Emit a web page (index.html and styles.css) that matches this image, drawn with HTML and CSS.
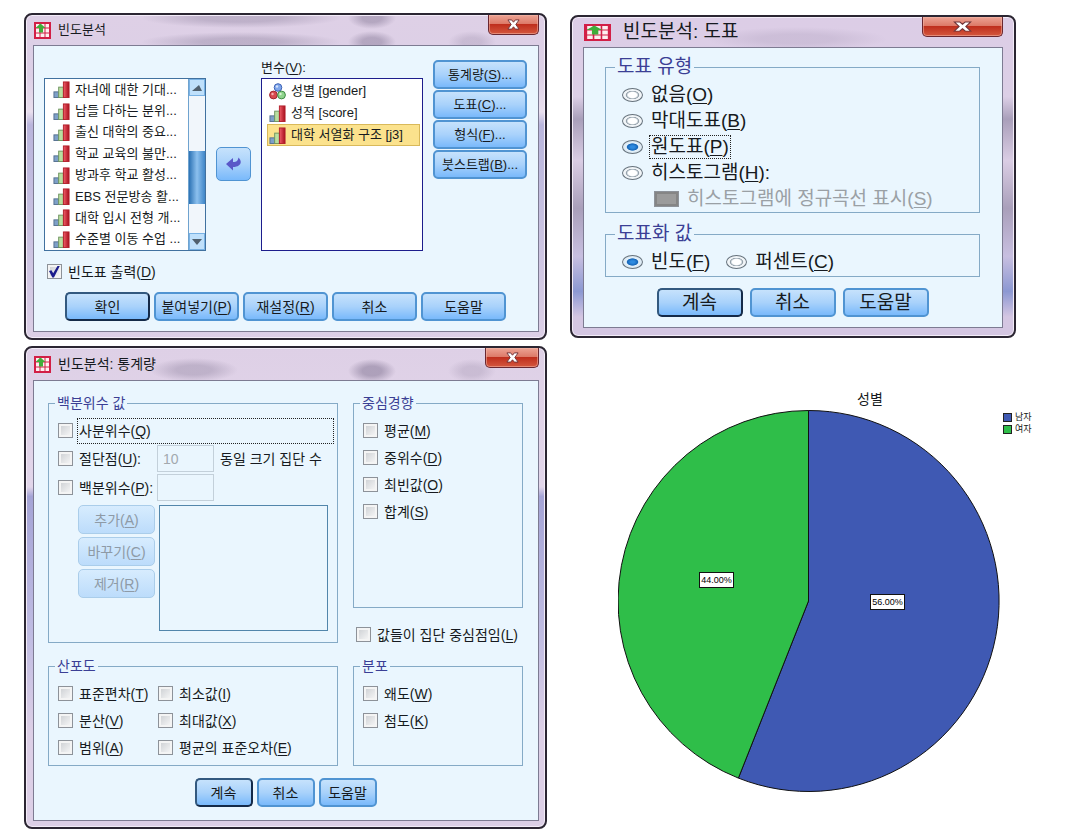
FILE: index.html
```html
<!DOCTYPE html>
<html lang="ko">
<head>
<meta charset="utf-8">
<title>빈도분석</title>
<link rel="stylesheet" href="styles.css">
</head>
<body>
<svg class="defs" aria-hidden="true">
  <defs>
    <linearGradient id="red" x1="0" x2="1"><stop offset="0" stop-color="#f0606a"/><stop offset="1" stop-color="#a80d1c"/></linearGradient>
    <symbol id="app" viewBox="0 0 17 17" preserveAspectRatio="none">
      <rect width="17" height="17" fill="#d21f46"/>
      <path d="M2 2h3.500v3.500H2zM6.500 2h4v3.500h-4zM11.500 2H15v3.500h-3.500zM2 6.500h3.500v4H2zM6.500 6.500h4v4h-4zM11.500 6.500H15v4h-3.500zM2 11.500h3.500V15H2zM6.500 11.500h4V15h-4zM11.500 11.500H15V15h-3.500z" fill="#fdeff0"/>
      <path d="M6.500 1.500L11.500 6H9v4.500H5V6H1.500z" fill="#3fae3a"/>
    </symbol>
    <symbol id="bars" viewBox="0 0 17 18">
      <rect x=".5" y="11.500" width="5" height="6" fill="#7ea0c8" stroke="#55708f"/>
      <rect x="5.500" y="6.500" width="5" height="11" fill="#b9dfa0" stroke="#6f9460"/>
      <rect x="10.500" y="1" width="6" height="16.500" fill="url(#red)" stroke="#b3202c"/>
    </symbol>
    <symbol id="balls" viewBox="0 0 17 17">
      <circle cx="9" cy="4.500" r="3.800" fill="#7fa6ea" stroke="#3d62b4"/>
      <circle cx="4.500" cy="12" r="3.900" fill="#d84a4e" stroke="#9d2630"/>
      <circle cx="12.500" cy="12" r="3.900" fill="#8fd48c" stroke="#3f8a45"/>
      <circle cx="3.500" cy="11" r="1.200" fill="#f6b0b0"/><circle cx="8" cy="3.500" r="1.200" fill="#d4e2fb"/><circle cx="11.500" cy="11" r="1.200" fill="#d8f5d4"/>
    </symbol>
    <symbol id="x" viewBox="0 0 14 12" preserveAspectRatio="none">
      <path d="M1 1h4l2 2.500L9 1h4L9.500 6l3.500 5H9L7 8.500 5 11H1l3.500-5z" fill="#fff" stroke="#6d3338" stroke-width="1"/>
    </symbol>
  </defs>
</svg>
<main class="page">

  <section class="dialog">
    <header class="titlebar">
      <svg class="appicon"><use href="#app"/></svg>
      <h1 class="title">빈도분석</h1>
      <button class="close" aria-label="닫기"><svg class="cross"><use href="#x"/></svg></button>
    </header>
    <div class="client freq">
      <div class="pickers">
        <div class="list source">
          <ul class="items">
            <li><svg class="ico"><use href="#bars"/></svg>자녀에 대한 기대...</li>
            <li><svg class="ico"><use href="#bars"/></svg>남들 다하는 분위...</li>
            <li><svg class="ico"><use href="#bars"/></svg>출신 대학의 중요...</li>
            <li><svg class="ico"><use href="#bars"/></svg>학교 교육의 불만...</li>
            <li><svg class="ico"><use href="#bars"/></svg>방과후 학교 활성...</li>
            <li><svg class="ico"><use href="#bars"/></svg>EBS 전문방송 활...</li>
            <li><svg class="ico"><use href="#bars"/></svg>대학 입시 전형 개...</li>
            <li><svg class="ico"><use href="#bars"/></svg>수준별 이동 수업 ...</li>
          </ul>
          <div class="scroll">
            <button class="arrow" aria-label="위로"><svg viewBox="0 0 10 6"><path d="M0 6L7 0l3 6z" fill="#50606e"/></svg></button>
            <div class="track"><div class="thumb"></div></div>
            <button class="arrow" aria-label="아래로"><svg viewBox="0 0 10 6"><path d="M0 0h10L5 6z" fill="#50606e"/></svg></button>
          </div>
        </div>
        <button class="btn move" aria-label="이동"><svg viewBox="0 0 16 14"><path d="M0 7l7-6v4c4 0 4.500-1 5.500-4.500C17 5 14.500 10 7 10v3.500z" fill="#5a57c8"/></svg></button>
        <div class="target">
          <span class="caption">변수(<u>V</u>):</span>
          <div class="list chosen">
            <ul class="items short">
              <li><svg class="ico"><use href="#balls"/></svg>성별 [gender]</li>
              <li><svg class="ico"><use href="#bars"/></svg>성적 [score]</li>
              <li class="selected"><svg class="ico"><use href="#bars"/></svg>대학 서열화 구조 [j3]</li>
            </ul>
          </div>
        </div>
        <div class="side">
          <button class="btn">통계량(<u>S</u>)...</button>
          <button class="btn">도표(<u>C</u>)...</button>
          <button class="btn">형식(<u>F</u>)...</button>
          <button class="btn">붓스트랩(<u>B</u>)...</button>
        </div>
      </div>
      <label class="opt output"><input type="checkbox" class="box" checked><span>빈도표 출력(<u>D</u>)</span></label>
      <div class="actions wide">
        <button class="btn default">확인</button>
        <button class="btn">붙여넣기(<u>P</u>)</button>
        <button class="btn">재설정(<u>R</u>)</button>
        <button class="btn">취소</button>
        <button class="btn">도움말</button>
      </div>
    </div>
  </section>

  <section class="dialog large">
    <header class="titlebar">
      <svg class="appicon"><use href="#app"/></svg>
      <h1 class="title">빈도분석: 도표</h1>
      <button class="close" aria-label="닫기"><svg class="cross"><use href="#x"/></svg></button>
    </header>
    <div class="client charts">
      <fieldset class="group">
        <legend>도표 유형</legend>
        <label class="opt"><input type="radio" class="dot" name="type"><span>없음(<u>O</u>)</span></label>
        <label class="opt"><input type="radio" class="dot" name="type"><span>막대도표(<u>B</u>)</span></label>
        <label class="opt"><input type="radio" class="dot" name="type" checked><span class="focus">원도표(<u>P</u>)</span></label>
        <label class="opt"><input type="radio" class="dot" name="type"><span>히스토그램(<u>H</u>):</span></label>
        <label class="opt nested"><input type="checkbox" class="box" disabled><span>히스토그램에 정규곡선 표시(<u>S</u>)</span></label>
      </fieldset>
      <fieldset class="group values">
        <legend>도표화 값</legend>
        <label class="opt"><input type="radio" class="dot" name="val" checked><span>빈도(<u>F</u>)</span></label>
        <label class="opt"><input type="radio" class="dot" name="val"><span>퍼센트(<u>C</u>)</span></label>
      </fieldset>
      <div class="actions">
        <button class="btn default">계속</button>
        <button class="btn">취소</button>
        <button class="btn">도움말</button>
      </div>
    </div>
  </section>

  <section class="dialog stat">
    <header class="titlebar">
      <svg class="appicon"><use href="#app"/></svg>
      <h1 class="title">빈도분석: 통계량</h1>
      <button class="close" aria-label="닫기"><svg class="cross"><use href="#x"/></svg></button>
    </header>
    <div class="client stats">
      <div class="groups">
        <fieldset class="group percent">
          <legend>백분위수 값</legend>
          <label class="opt"><input type="checkbox" class="box"><span class="focus fill">사분위수(<u>Q</u>)</span></label>
          <div class="line">
            <label class="opt"><input type="checkbox" class="box"><span>절단점(<u>U</u>):</span></label>
            <input type="text" class="field" value="10" aria-label="절단점" disabled>
            <span>동일 크기 집단 수</span>
          </div>
          <div class="line">
            <label class="opt"><input type="checkbox" class="box"><span>백분위수(<u>P</u>):</span></label>
            <input type="text" class="field" aria-label="백분위수" disabled>
          </div>
          <div class="editor">
            <div class="stack">
              <button class="btn" disabled>추가(<u>A</u>)</button>
              <button class="btn" disabled>바꾸기(<u>C</u>)</button>
              <button class="btn" disabled>제거(<u>R</u>)</button>
            </div>
            <div class="values-list"></div>
          </div>
        </fieldset>
        <div class="center">
          <fieldset class="group grow">
            <legend>중심경향</legend>
            <label class="opt"><input type="checkbox" class="box"><span>평균(<u>M</u>)</span></label>
            <label class="opt"><input type="checkbox" class="box"><span>중위수(<u>D</u>)</span></label>
            <label class="opt"><input type="checkbox" class="box"><span>최빈값(<u>O</u>)</span></label>
            <label class="opt"><input type="checkbox" class="box"><span>합계(<u>S</u>)</span></label>
          </fieldset>
          <label class="opt midpoint"><input type="checkbox" class="box"><span>값들이 집단 중심점임(<u>L</u>)</span></label>
        </div>
        <fieldset class="group spread">
          <legend>산포도</legend>
          <label class="opt"><input type="checkbox" class="box"><span>표준편차(<u>T</u>)</span></label>
          <label class="opt"><input type="checkbox" class="box"><span>최소값(<u>I</u>)</span></label>
          <label class="opt"><input type="checkbox" class="box"><span>분산(<u>V</u>)</span></label>
          <label class="opt"><input type="checkbox" class="box"><span>최대값(<u>X</u>)</span></label>
          <label class="opt"><input type="checkbox" class="box"><span>범위(<u>A</u>)</span></label>
          <label class="opt"><input type="checkbox" class="box"><span>평균의 표준오차(<u>E</u>)</span></label>
        </fieldset>
        <fieldset class="group">
          <legend>분포</legend>
          <label class="opt"><input type="checkbox" class="box"><span>왜도(<u>W</u>)</span></label>
          <label class="opt"><input type="checkbox" class="box"><span>첨도(<u>K</u>)</span></label>
        </fieldset>
      </div>
      <div class="actions">
        <button class="btn default">계속</button>
        <button class="btn">취소</button>
        <button class="btn">도움말</button>
      </div>
    </div>
  </section>

  <figure class="chart">
    <figcaption class="chart-title">성별</figcaption>
    <div class="plot">
      <svg class="pie" viewBox="0 0 382 382" role="img" aria-label="성별">
        <path d="M190.500 191V.5A190.500 190.500 0 1 1 120.400 368.100Z" fill="#3f59b3" stroke="#111" stroke-width="1"/>
        <path d="M190.500 191L120.400 368.100A190.500 190.500 0 0 1 190.500 .5Z" fill="#2fbe49" stroke="#111" stroke-width="1"/>
        <rect x="252.500" y="184.500" width="34" height="15" fill="#fff" stroke="#111"/>
        <text x="269.500" y="195" class="pct">56.00%</text>
        <rect x="81.500" y="162.500" width="34" height="15" fill="#fff" stroke="#111"/>
        <text x="98.500" y="173" class="pct">44.00%</text>
      </svg>
      <ul class="legend">
        <li><span class="swatch male"></span>남자</li>
        <li><span class="swatch female"></span>여자</li>
      </ul>
    </div>
  </figure>
</main>
</body>
</html>
```

FILE: styles.css
```css
* { box-sizing: border-box; }

body {
  margin: 0;
  background: #fff;
  color: #161a20;
  font: 13px/20px "Liberation Sans", "Noto Sans CJK KR", sans-serif;
}

button, input { font: inherit; color: inherit; margin: 0; }
ul { list-style: none; margin: 0; padding: 0; }
u { text-underline-offset: 2px; }
.defs { position: absolute; width: 0; height: 0; }

.page {
  display: grid;
  grid-template-columns: 523fr 496fr;
  column-gap: 23px;
  row-gap: 6px;
  align-items: start;
  padding: 13px 0 8px 24px;
}

/* Window frame */
.dialog {
  border: 2px solid #2b2632;
  border-radius: 8px;
  padding: 0 6px 6px 7px;
  background:
    radial-gradient(ellipse 100px 10px at 215px 3px, #8f839f66 40%, transparent),
    radial-gradient(ellipse 100px 10px at 215px 27px, #8f839f66 40%, transparent),
    radial-gradient(ellipse 24px 11px at 346px 3px, #76698866 40%, transparent),
    radial-gradient(ellipse 24px 11px at 346px 27px, #76698866 40%, transparent),
    radial-gradient(ellipse 24px 11px at 446px 27px, #76698833 40%, transparent),
    linear-gradient(#ded0e6 0, #dccfe6 60px, #e9dfee 30%, #b9b5dc 34%, #c5bfe0 60%, #dccfe6 100%);
  box-shadow: inset 0 0 0 1px #f3ecf8;
}
.dialog.stat {
  background:
    radial-gradient(ellipse 44px 12px at 168px 22px, #8f839f66 40%, transparent),
    radial-gradient(ellipse 24px 12px at 346px 23px, #76698877 40%, transparent),
    radial-gradient(ellipse 24px 12px at 446px 23px, #76698833 40%, transparent),
    linear-gradient(#ded0e6 0, #e2d6ea 29%, #a5a4d6 31%, #c0bce2 60%, #dccfe6 80%);
}
.dialog.large {
  margin: 2px 50px 0 0;
  padding: 0 11px 8px 11px;
  font-size: 19px;
  background:
    radial-gradient(ellipse 90px 12px at 225px 22px, #a396b344 40%, transparent),
    linear-gradient(#dccde6 0, #dccfe6 25%, #a99fba 32%, #dacde4 45%, #a99fba 60%, #c8bfe0 75%, #8c98d2 86%, #d4c6e2 94%);
}

.titlebar { display: flex; align-items: center; height: 30px; gap: 7px; }
.stat .titlebar { height: 32px; }
.appicon { width: 17px; height: 17px; margin-left: 1px; }
.large .appicon { width: 27px; height: 17px; }
.large .titlebar { gap: 12px; }
.title { flex: 1; margin: 0; font-size: 13px; font-weight: 400; }
.stat .title { font-size: 14px; }
.large .title { font-size: 19px; }
.close {
  align-self: flex-start;
  display: grid;
  place-items: center;
  width: 51px;
  height: 20px;
  padding: 0;
  border: 1px solid #6a2730;
  border-top: 0;
  border-radius: 0 0 5px 5px;
  background: linear-gradient(#eda394 0, #dd7b69 45%, #bf2f1d 50%, #d4573e 100%);
  box-shadow: inset 0 0 0 1px #f3b9aa88;
}
.stat .close { width: 54px; }
.large .close { width: 81px; }
.cross { width: 13px; height: 11px; }
.large .cross { width: 19px; height: 11px; }

.client { border: 1px solid #7d7b92; background: #eaf6fe; }

/* Buttons */
.btn {
  height: 29px;
  padding: 0;
  border: 2px solid #5094d2;
  border-radius: 5px;
  background: linear-gradient(#c6e2fc 0, #a9d2fb 50%, #79b9fb 100%);
  white-space: nowrap;
}
.btn.default { border-color: #33597f; border-right-color: #142a48; border-bottom-color: #142a48; }
.btn:disabled { border: 1px solid #aacdea; color: #8e9aa6; background: linear-gradient(#d7ecfe, #bcdcfb); }
.actions { display: flex; justify-content: center; gap: 4px; }
.actions .btn { width: 58px; }
.actions.wide .btn { width: 85px; font-size: 14px; }
.large .actions { gap: 7px; }
.large .actions .btn { width: 86px; line-height: 20px; }

/* Options */
.opt { display: flex; align-items: center; gap: 6px; height: 27px; white-space: nowrap; }
.box, .dot { appearance: none; flex: none; display: grid; place-items: center; }
.box {
  width: 15px;
  height: 15px;
  border: 1px solid #8d9299;
  background: linear-gradient(135deg, #c9ccd0, #fbfbfb);
  box-shadow: inset 0 0 0 2px #f4f4f4;
}
.box:checked::before {
  content: "";
  width: 11px;
  height: 12px;
  background: #1c1c8c;
  clip-path: polygon(0 45%, 22% 40%, 38% 65%, 80% 0, 100% 0, 45% 100%, 30% 100%);
}
.dot {
  width: 21px;
  height: 14px;
  border: 1px solid #66727c;
  border-radius: 50%;
  background: radial-gradient(closest-side, #fff 45%, #cfd8de 55%, #8d99a3 65%, #f1f5f8 75%);
}
.dot:checked { background: radial-gradient(closest-side, #2f8be0 20%, #1666b8 55%, #e4f1fa 65%, #dbe8f2 100%); }
.focus { outline: 1px dotted #222; outline-offset: 1px; }
.focus.fill { flex: 1; line-height: 22px; }

.group {
  min-width: 0;
  margin: 0;
  padding: 4px 5px 4px 9px;
  border: 1px solid #85aac6;
}
.group legend { padding: 0 2px; margin-left: -3px; color: #3b3f95; line-height: 20px; height: 20px; }

/* Frequencies window */
.freq { padding: 14px 11px 10px 10px; }
.pickers {
  display: grid;
  grid-template-columns: 163fr 35px 163fr 94px;
  column-gap: 10px;
}
.list { display: flex; height: 173px; border: 1px solid #41719f; background: #fff; }
.source { margin-top: 18px; }
.items { flex: 1; display: flex; flex-direction: column; min-width: 0; padding-left: 8px; white-space: nowrap; }
.items li { flex: 1; display: flex; align-items: center; gap: 5px; }
.ico { flex: none; width: 17px; height: 17px; }
.scroll { width: 17px; display: flex; flex-direction: column; border-left: 1px solid #6fa3cf; }
.arrow { display: grid; place-items: center; height: 17px; padding: 0; border: 1px solid #79b2e4; background: #bfe0fb; }
.arrow svg { width: 10px; height: 6px; }
.track { flex: 1; display: flex; flex-direction: column; background: #f1f6fb; }
.thumb { height: 53px; margin-top: auto; margin-bottom: 29px; background: linear-gradient(90deg, #2c72b4, #8cc0ee 50%, #3f86c8); }
.move { margin-top: 87px; height: 34px; border-width: 1px; display: grid; place-items: center; }
.move svg { width: 16px; height: 14px; }
.target { display: flex; flex-direction: column; }
.caption { height: 18px; line-height: 15px; }
.chosen { border-color: #1d1d8c; }
.items.short { padding: 1px 2px 0 5px; }
.short li { flex: none; height: 22px; padding-left: 2px; }
.short .selected { background: #fbe28d; border: 1px solid #d9b95a; padding-left: 1px; }
.side { display: flex; flex-direction: column; gap: 1px; }
.output { margin: 7px 0 7px 3px; font-size: 14px; }

/* Charts window */
.charts { padding: 9px 22px 10px 21px; }
.charts .group { padding: 5px 8px 0 16px; }
.charts .opt { height: 26px; gap: 8px; }
.charts .nested { margin-left: 32px; color: #9aa0a5; }
.charts .nested .box { width: 25px; height: 16px; background: #9b9b9b; box-shadow: inset 0 0 0 2px #858585; }
.charts .group legend { margin-left: -7px; }
.charts .values { display: flex; gap: 16px; margin: 11px 0; padding-bottom: 1px; }

/* Statistics window */
.stats { padding: 12px 15px 13px 14px; font-size: 14px; }
.groups {
  display: grid;
  grid-template-columns: 290fr 170fr;
  gap: 13px 15px;
  margin-bottom: 12px;
}
.line { display: grid; grid-template-columns: 93px 57px 1fr; column-gap: 6px; align-items: center; height: 29px; white-space: nowrap; }
.field { width: 100%; height: 27px; padding: 0 5px; border: 1px solid #c3d0da; background: #eaf6fe; }
.field:disabled { color: #a3a9ae; }
.editor { display: grid; grid-template-columns: 77px 1fr; column-gap: 4px; margin: 3px 4px 7px 20px; }
.stack { display: flex; flex-direction: column; gap: 3px; }
.values-list { height: 126px; border: 1px solid #5286ab; }
.center { display: flex; flex-direction: column; }
.grow { flex: 1; }
.midpoint { margin: 13px 0 -5px 3px; }
.spread { display: grid; grid-template-columns: 100px 1fr; }

/* Pie chart */
.chart { margin: 0; padding-top: 42px; }
.chart-title { margin-left: 104px; text-align: center; font-size: 14px; height: 22px; line-height: 22px; }
.plot { display: flex; padding-left: 48px; }
.pie { flex: 0 1 382px; min-width: 0; }
.pct { font-size: 9px; text-anchor: middle; }
.legend { margin: 1px 0 0 3px; font-size: 9px; line-height: 12px; white-space: nowrap; }
.legend li { display: flex; align-items: center; gap: 3px; }
.swatch { width: 9px; height: 9px; border: 1px solid #222; }
.male { background: #3f59b3; }
.female { background: #2fbe49; }
```
